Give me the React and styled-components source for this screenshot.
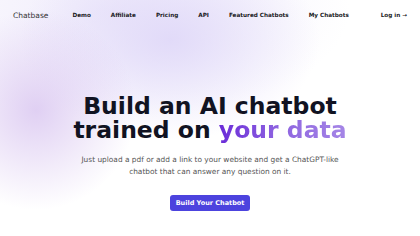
import React from 'react';
import styled, { createGlobalStyle } from 'styled-components';

const GlobalStyle = createGlobalStyle`
  html, body {
    margin: 0;
    padding: 0;
    background: #fff;
  }
  body {
    font-family: 'DejaVu Sans', 'Liberation Sans', sans-serif;
  }
`;

const Page = styled.div`
  width: 420px;
  height: 236px;
  overflow: hidden;
  background:
    radial-gradient(circle at 36px 110px, rgba(216, 196, 240, 0.8) 0px, rgba(216, 196, 240, 0) 100px),
    radial-gradient(ellipse 150px 100px at 170px 40px, rgba(222, 214, 248, 0.85) 0px, rgba(222, 214, 248, 0) 100%),
    radial-gradient(ellipse 240px 110px at 110px 10px, rgba(238, 234, 251, 0.9) 0px, rgba(238, 234, 251, 0) 100%),
    #fff;
`;

const Header = styled.header`
  display: flex;
  align-items: center;
  height: 30px;
  padding: 0 13px;
`;

const Logo = styled.div`
  font-size: 7.5px;
  color: #333;
  margin-right: 24px;
`;

const Nav = styled.nav`
  display: flex;
  align-items: center;
  gap: 20px;
  flex: 1;
`;

const NavLink = styled.a`
  font-size: 5.7px;
  font-weight: bold;
  color: #1a1a24;
  text-decoration: none;
  margin-left: ${(p) => (p.$right ? 'auto' : '0')};
`;

const Hero = styled.section`
  display: flex;
  flex-direction: column;
  align-items: center;
  padding-top: 64px;
  text-align: center;
`;

const Title = styled.h1`
  margin: 0;
  font-size: 23.5px;
  line-height: 24px;
  font-weight: bold;
  color: #111322;
`;

const Accent = styled.span`
  background: linear-gradient(90deg, #6a2bd8 0%, #8d62e0 45%, #a586e6 100%);
  -webkit-background-clip: text;
  background-clip: text;
  color: transparent;
`;

const Subtitle = styled.p`
  margin: 12px 0 0;
  max-width: 280px;
  font-size: 7.4px;
  line-height: 12px;
  color: #555;
`;

const CTA = styled.button`
  margin-top: 17px;
  height: 16px;
  padding: 0 6px;
  border: none;
  border-radius: 3px;
  background: #4c43de;
  color: #fff;
  font-family: inherit;
  font-size: 6.5px;
  font-weight: bold;
  cursor: pointer;
`;

const links = ['Demo', 'Affiliate', 'Pricing', 'API', 'Featured Chatbots', 'My Chatbots'];

export default function App() {
  return (
    <Page>
      <GlobalStyle />
      <Header>
        <Logo>Chatbase</Logo>
        <Nav>
          {links.map((l) => (
            <NavLink key={l} href="#">
              {l}
            </NavLink>
          ))}
          <NavLink $right href="#">
            Log in →
          </NavLink>
        </Nav>
      </Header>
      <Hero>
        <Title>
          Build an AI chatbot
          <br />
          trained on <Accent>your data</Accent>
        </Title>
        <Subtitle>
          Just upload a pdf or add a link to your website and get a ChatGPT-like chatbot that can
          answer any question on it.
        </Subtitle>
        <CTA>Build Your Chatbot</CTA>
      </Hero>
    </Page>
  );
}
